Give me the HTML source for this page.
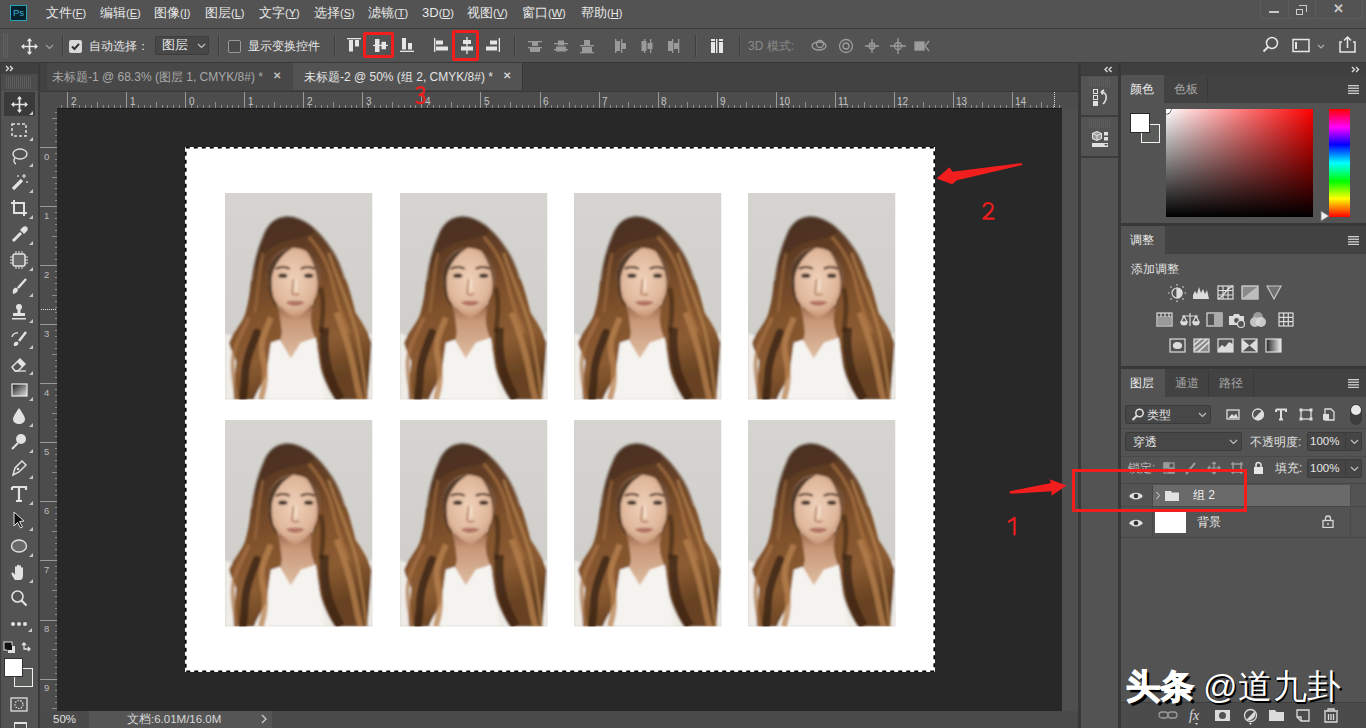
<!DOCTYPE html><html><head><meta charset="utf-8"><style>
*{box-sizing:border-box;margin:0;padding:0}
html,body{width:1366px;height:728px;overflow:hidden;background:#535353}
body{position:relative;font-family:"Liberation Sans",sans-serif;color:#e6e6e6}
.a{position:absolute}
.t{position:absolute;white-space:nowrap;line-height:1}
</style></head><body>
<div class="a" style="left:0px;top:0px;width:1366px;height:28px;background:#535353;"></div>
<div class="a" style="left:0px;top:28px;width:1366px;height:1px;background:#3a3a3a;"></div>
<div class="a" style="left:10px;top:5px;width:17px;height:16px;background:#06202c;border:1.5px solid #27a2b8"></div>
<div class="t" style="left:13px;top:8px;font-size:9.5px;color:#3ab4d0;">Ps</div>
<div class="t" style="left:46px;top:6px;font-size:13px;color:#e8e8e8;">文件<span style="font-size:11px;position:relative;top:-0.5px">(<u>F</u>)</span></div>
<div class="t" style="left:100px;top:6px;font-size:13px;color:#e8e8e8;">编辑<span style="font-size:11px;position:relative;top:-0.5px">(<u>E</u>)</span></div>
<div class="t" style="left:154px;top:6px;font-size:13px;color:#e8e8e8;">图像<span style="font-size:11px;position:relative;top:-0.5px">(<u>I</u>)</span></div>
<div class="t" style="left:205px;top:6px;font-size:13px;color:#e8e8e8;">图层<span style="font-size:11px;position:relative;top:-0.5px">(<u>L</u>)</span></div>
<div class="t" style="left:259px;top:6px;font-size:13px;color:#e8e8e8;">文字<span style="font-size:11px;position:relative;top:-0.5px">(<u>Y</u>)</span></div>
<div class="t" style="left:314px;top:6px;font-size:13px;color:#e8e8e8;">选择<span style="font-size:11px;position:relative;top:-0.5px">(<u>S</u>)</span></div>
<div class="t" style="left:368px;top:6px;font-size:13px;color:#e8e8e8;">滤镜<span style="font-size:11px;position:relative;top:-0.5px">(<u>T</u>)</span></div>
<div class="t" style="left:422px;top:6px;font-size:13px;color:#e8e8e8;">3D<span style="font-size:11px;position:relative;top:-0.5px">(<u>D</u>)</span></div>
<div class="t" style="left:467px;top:6px;font-size:13px;color:#e8e8e8;">视图<span style="font-size:11px;position:relative;top:-0.5px">(<u>V</u>)</span></div>
<div class="t" style="left:522px;top:6px;font-size:13px;color:#e8e8e8;">窗口<span style="font-size:11px;position:relative;top:-0.5px">(<u>W</u>)</span></div>
<div class="t" style="left:581px;top:6px;font-size:13px;color:#e8e8e8;">帮助<span style="font-size:11px;position:relative;top:-0.5px">(<u>H</u>)</span></div>
<div class="a" style="left:1260px;top:-3px;width:103px;height:22px;border:1px solid #5d5d5d;border-radius:3px"></div>
<div class="a" style="left:1288px;top:0px;width:1px;height:18px;background:#5d5d5d;"></div>
<div class="a" style="left:1315px;top:0px;width:1px;height:18px;background:#5d5d5d;"></div>
<div class="a" style="left:1269px;top:11px;width:10px;height:2px;background:#c8c8c8;"></div>
<div class="a" style="left:1296px;top:9px;width:7px;height:6px;border:1.5px solid #c8c8c8"></div>
<div class="a" style="left:1299px;top:5px;width:8px;height:7px;border:1.5px solid #c8c8c8;border-left:none;border-bottom:none"></div>
<div class="t" style="left:1333px;top:2px;font-size:13px;color:#c8c8c8;font-weight:bold;">✕</div>
<div class="a" style="left:0px;top:29px;width:1366px;height:33px;background:#535353;"></div>
<div class="a" style="left:0px;top:62px;width:1366px;height:1px;background:#383838;"></div>
<div class="a" style="left:3px;top:33px;width:5px;height:25px;background:repeating-linear-gradient(90deg,#5f5f5f 0 1px,transparent 1px 2px),repeating-linear-gradient(180deg,transparent 0 1px,#535353 1px 2px)"></div>
<svg class="a" style="left:21px;top:38px" width="17" height="17" viewBox="0 0 16 16"><path d="M8 1 L8 15 M1 8 L15 8" stroke="#e6e6e6" stroke-width="1.6"/><path d="M8 0 L5.5 3 L10.5 3Z M8 16 L5.5 13 L10.5 13Z M0 8 L3 5.5 L3 10.5Z M16 8 L13 5.5 L13 10.5Z" fill="#e6e6e6"/></svg>
<svg class="a" style="left:45px;top:44px" width="9" height="6"><path d="M1 1 L4.5 4.5 L8 1" stroke="#a0a0a0" fill="none" stroke-width="1.2"/></svg>
<div class="a" style="left:62px;top:35px;width:1px;height:22px;background:#3e3e3e;"></div>
<div class="a" style="left:63px;top:35px;width:1px;height:22px;background:#5c5c5c;"></div>
<div class="a" style="left:69px;top:40px;width:13px;height:13px;background:#d9d9d9;border-radius:2px"></div>
<svg class="a" style="left:69px;top:40px" width="13" height="13"><path d="M3 6.5 L5.5 9 L10 3.8" stroke="#333" stroke-width="2" fill="none"/></svg>
<div class="t" style="left:89px;top:40px;font-size:12px;color:#e4e4e4;">自动选择：</div>
<div class="a" style="left:155px;top:36px;width:54px;height:19px;background:#474747;border:1px solid #3d3d3d;border-radius:2px"></div>
<div class="t" style="left:162px;top:39px;font-size:12.5px;color:#e4e4e4;">图层</div>
<svg class="a" style="left:197px;top:43px" width="9" height="6"><path d="M1 1 L4.5 4.5 L8 1" stroke="#c0c0c0" fill="none" stroke-width="1.2"/></svg>
<div class="a" style="left:218px;top:35px;width:1px;height:22px;background:#3e3e3e;"></div>
<div class="a" style="left:219px;top:35px;width:1px;height:22px;background:#5c5c5c;"></div>
<div class="a" style="left:228px;top:40px;width:13px;height:13px;background:#4a4a4a;border:1.5px solid #9a9a9a;border-radius:2px"></div>
<div class="t" style="left:248px;top:40px;font-size:12px;color:#e4e4e4;">显示变换控件</div>
<div class="a" style="left:334px;top:35px;width:1px;height:22px;background:#3e3e3e;"></div>
<div class="a" style="left:335px;top:35px;width:1px;height:22px;background:#5c5c5c;"></div>
<svg class="a" style="left:347px;top:38px" width="17" height="18" fill="#e6e6e6"><rect x="0" y="0" width="14" height="1.3"/><rect x="2" y="2" width="4" height="11.5"/><rect x="8" y="2" width="4" height="6.5"/></svg>
<svg class="a" style="left:373px;top:38px" width="17" height="18" fill="#e6e6e6"><rect x="0" y="6.8" width="15" height="1.3"/><rect x="2" y="1" width="4.5" height="13"/><rect x="8.5" y="3.8" width="4.5" height="7.5"/></svg>
<svg class="a" style="left:400px;top:38px" width="17" height="18" fill="#e6e6e6"><rect x="0" y="12.7" width="14" height="1.3"/><rect x="2" y="0" width="4" height="11.5"/><rect x="8" y="5" width="4" height="6.5"/></svg>
<svg class="a" style="left:434px;top:38px" width="17" height="18" fill="#e6e6e6"><rect x="0" y="0" width="1.3" height="14"/><rect x="2" y="2.5" width="7" height="4"/><rect x="2" y="8.5" width="12" height="4"/></svg>
<svg class="a" style="left:461px;top:37px" width="17" height="18" fill="#e6e6e6"><rect x="5.3" y="0" width="1.3" height="17"/><rect x="2" y="3" width="8" height="4"/><rect x="0" y="9.5" width="12" height="4"/></svg>
<svg class="a" style="left:486px;top:38px" width="17" height="18" fill="#e6e6e6"><rect x="12.7" y="0" width="1.3" height="14"/><rect x="4" y="2.5" width="7" height="4"/><rect x="0" y="8.5" width="11" height="4"/></svg>
<div class="a" style="left:514px;top:35px;width:1px;height:22px;background:#3e3e3e;"></div>
<div class="a" style="left:515px;top:35px;width:1px;height:22px;background:#5c5c5c;"></div>
<svg class="a" style="left:528px;top:39px" width="15" height="15" fill="#9a9a9a"><rect x="0" y="2" width="14" height="1.3"/><rect x="4" y="3" width="6" height="4"/><rect x="0" y="8" width="14" height="1.3"/><rect x="2" y="9" width="10" height="4"/></svg>
<svg class="a" style="left:554px;top:39px" width="15" height="15" fill="#9a9a9a"><rect x="0" y="4" width="14" height="1.3"/><rect x="4" y="1.5" width="6" height="5"/><rect x="0" y="10" width="14" height="1.3"/><rect x="2" y="7.5" width="10" height="5"/></svg>
<svg class="a" style="left:580px;top:39px" width="15" height="15" fill="#9a9a9a"><rect x="4" y="1" width="6" height="5"/><rect x="0" y="6" width="14" height="1.3"/><rect x="2" y="8" width="10" height="5"/><rect x="0" y="13" width="14" height="1.3"/></svg>
<svg class="a" style="left:614px;top:39px" width="15" height="15" fill="#9a9a9a"><rect x="1" y="0" width="1.3" height="14"/><rect x="2" y="2" width="4" height="10"/><rect x="7" y="0" width="1.3" height="14"/><rect x="8" y="4" width="4" height="6"/></svg>
<svg class="a" style="left:640px;top:39px" width="15" height="15" fill="#9a9a9a"><rect x="4" y="0" width="1.3" height="14"/><rect x="1.5" y="2" width="5" height="10"/><rect x="10" y="0" width="1.3" height="14"/><rect x="7.5" y="4" width="5" height="6"/></svg>
<svg class="a" style="left:666px;top:39px" width="15" height="15" fill="#9a9a9a"><rect x="2" y="2" width="4" height="10"/><rect x="6" y="0" width="1.3" height="14"/><rect x="8" y="4" width="4" height="6"/><rect x="12" y="0" width="1.3" height="14"/></svg>
<div class="a" style="left:695px;top:35px;width:1px;height:22px;background:#3e3e3e;"></div>
<div class="a" style="left:696px;top:35px;width:1px;height:22px;background:#5c5c5c;"></div>
<svg class="a" style="left:710px;top:38px" width="15" height="16" fill="#e6e6e6"><rect x="1" y="4" width="4" height="11"/><rect x="9" y="4" width="4" height="11"/><rect x="6" y="1" width="1.4" height="14"/><rect x="1" y="1" width="4" height="2"/><rect x="9" y="1" width="4" height="2"/></svg>
<div class="a" style="left:739px;top:35px;width:1px;height:22px;background:#3e3e3e;"></div>
<div class="a" style="left:740px;top:35px;width:1px;height:22px;background:#5c5c5c;"></div>
<div class="t" style="left:748px;top:40px;font-size:12px;color:#8c8c8c;">3D 模式:</div>
<svg class="a" style="left:810px;top:37px" width="125" height="18" fill="none" stroke="#9c9c9c" stroke-width="1.3"><ellipse cx="9" cy="9" rx="7" ry="4"/><circle cx="10" cy="7" r="3.5"/><circle cx="36" cy="9" r="6.5"/><circle cx="36" cy="9" r="3"/><path d="M62 2 L62 16 M55 9 L69 9"/><circle cx="62" cy="9" r="3"/><path d="M88 1 L88 17 M80 9 L96 9"/><circle cx="88" cy="9" r="3.5"/><rect x="105" y="5" width="9" height="8" fill="#9c9c9c"/><path d="M119 4 L115 9 L119 14"/></svg>
<svg class="a" style="left:1262px;top:36px" width="100" height="18" fill="none" stroke="#e6e6e6" stroke-width="1.5"><circle cx="10" cy="7" r="5.5"/><path d="M6 11 L1.5 15.5" stroke-width="2"/><rect x="31" y="3.5" width="16" height="12"/><rect x="33" y="6" width="2" height="7" fill="#e6e6e6" stroke="none"/><path d="M56 9 L59 12 L62 9" stroke="#b0b0b0" stroke-width="1.1"/><path d="M80 6 L78 6 L78 16 L93 16 L93 6 L91 6 M85.5 12 L85.5 1 M82 4.5 L85.5 1 L89 4.5"/></svg>
<div class="a" style="left:0px;top:63px;width:38px;height:665px;background:#535353;"></div>
<div class="a" style="left:0px;top:63px;width:38px;height:11px;background:#3f3f3f;"></div>
<svg class="a" style="left:5px;top:65px" width="10" height="7" fill="none" stroke="#dcdcdc" stroke-width="1.4"><path d="M1 1 L3.5 3.5 L1 6 M5 1 L7.5 3.5 L5 6"/></svg>
<div class="a" style="left:0px;top:74px;width:38px;height:17px;background:#4b4b4b;"></div>
<div class="a" style="left:6px;top:76px;width:26px;height:13px;background:repeating-linear-gradient(90deg,#5c5c5c 0 1px,transparent 1px 2px)"></div>
<div class="a" style="left:0px;top:63px;width:1px;height:665px;background:#3c3c3c;"></div>
<div class="a" style="left:38px;top:63px;width:2px;height:665px;background:#393939;"></div>
<div class="a" style="left:4px;top:92px;width:31px;height:24px;background:#3a3a3a;"></div>
<svg class="a" style="left:11px;top:96px" width="17" height="17" viewBox="0 0 16 16"><path d="M8 1 L8 15 M1 8 L15 8" stroke="#e2e2e2" stroke-width="1.6"/><path d="M8 0 L5.5 3 L10.5 3Z M8 16 L5.5 13 L10.5 13Z M0 8 L3 5.5 L3 10.5Z M16 8 L13 5.5 L13 10.5Z" fill="#e2e2e2"/></svg>
<svg class="a" style="left:29px;top:111px" width="4" height="4"><path d="M4 0 L4 4 L0 4Z" fill="#c8c8c8"/></svg>
<svg class="a" style="left:10px;top:121px" width="18" height="18" viewBox="0 0 18 18"><rect x="2" y="3" width="14" height="12" fill="none" stroke="#e2e2e2" stroke-width="1.5" stroke-dasharray="3 2"/></svg>
<svg class="a" style="left:29px;top:137px" width="4" height="4"><path d="M4 0 L4 4 L0 4Z" fill="#c8c8c8"/></svg>
<svg class="a" style="left:10px;top:147px" width="18" height="18" viewBox="0 0 18 18"><ellipse cx="10" cy="7" rx="7" ry="5" fill="none" stroke="#e2e2e2" stroke-width="1.4"/><path d="M5 11 C3 13 4 16 6 17" fill="none" stroke="#e2e2e2" stroke-width="1.4"/></svg>
<svg class="a" style="left:29px;top:163px" width="4" height="4"><path d="M4 0 L4 4 L0 4Z" fill="#c8c8c8"/></svg>
<svg class="a" style="left:10px;top:173px" width="18" height="18" viewBox="0 0 18 18"><path d="M3 16 L12 7" stroke="#e2e2e2" stroke-width="3.2"/><path d="M14 1 L14 5 M12 3 L16 3 M8 2 L8 4 M17 8 L17 10" stroke="#e2e2e2" stroke-width="1.2"/></svg>
<svg class="a" style="left:29px;top:189px" width="4" height="4"><path d="M4 0 L4 4 L0 4Z" fill="#c8c8c8"/></svg>
<svg class="a" style="left:10px;top:199px" width="18" height="18" viewBox="0 0 18 18"><path d="M4 1 L4 14 L17 14 M1 4 L14 4 L14 17" fill="none" stroke="#e2e2e2" stroke-width="2"/></svg>
<svg class="a" style="left:29px;top:215px" width="4" height="4"><path d="M4 0 L4 4 L0 4Z" fill="#c8c8c8"/></svg>
<svg class="a" style="left:10px;top:225px" width="18" height="18" viewBox="0 0 18 18"><path d="M3 16 L11 8" stroke="#e2e2e2" stroke-width="3" fill="none"/><path d="M10 5 L13 2 C14 1 16 1 17 2 C18 3 18 5 17 6 L14 9Z" fill="#e2e2e2"/></svg>
<svg class="a" style="left:29px;top:241px" width="4" height="4"><path d="M4 0 L4 4 L0 4Z" fill="#c8c8c8"/></svg>
<svg class="a" style="left:10px;top:251px" width="18" height="18" viewBox="0 0 18 18"><rect x="3" y="3" width="12" height="12" rx="2" fill="#6a6a6a" stroke="#e2e2e2" stroke-width="1.5"/><path d="M6 0 V3 M9 0 V3 M12 0 V3 M6 15 V18 M9 15 V18 M12 15 V18 M0 6 H3 M0 9 H3 M0 12 H3 M15 6 H18 M15 9 H18 M15 12 H18" stroke="#e2e2e2" stroke-width="1"/></svg>
<svg class="a" style="left:29px;top:267px" width="4" height="4"><path d="M4 0 L4 4 L0 4Z" fill="#c8c8c8"/></svg>
<svg class="a" style="left:10px;top:277px" width="18" height="18" viewBox="0 0 18 18"><path d="M8 11 L16 2" stroke="#e2e2e2" stroke-width="2.5"/><path d="M3 17 C2 13 4 10 7 11 C9 12 8 16 3 17Z" fill="#e2e2e2"/></svg>
<svg class="a" style="left:29px;top:293px" width="4" height="4"><path d="M4 0 L4 4 L0 4Z" fill="#c8c8c8"/></svg>
<svg class="a" style="left:10px;top:303px" width="18" height="18" viewBox="0 0 18 18"><circle cx="9" cy="4" r="3" fill="#e2e2e2"/><rect x="7.5" y="6" width="3" height="5" fill="#e2e2e2"/><rect x="3" y="10" width="12" height="3" fill="#e2e2e2"/><rect x="2" y="15" width="14" height="1.5" fill="#e2e2e2"/></svg>
<svg class="a" style="left:29px;top:319px" width="4" height="4"><path d="M4 0 L4 4 L0 4Z" fill="#c8c8c8"/></svg>
<svg class="a" style="left:10px;top:329px" width="18" height="18" viewBox="0 0 18 18"><path d="M9 12 L16 3" stroke="#e2e2e2" stroke-width="2.5"/><path d="M4 17 C3 14 5 12 8 13 C9 15 8 17 4 17Z" fill="#e2e2e2"/><path d="M2 8 A5 5 0 0 1 8 4" fill="none" stroke="#e2e2e2" stroke-width="1.4"/></svg>
<svg class="a" style="left:29px;top:345px" width="4" height="4"><path d="M4 0 L4 4 L0 4Z" fill="#c8c8c8"/></svg>
<svg class="a" style="left:10px;top:355px" width="18" height="18" viewBox="0 0 18 18"><path d="M2 12 L10 4 L15 9 L8 16 L5 16Z" fill="none" stroke="#e2e2e2" stroke-width="1.5"/><path d="M7 7 L10 4 L15 9 L12 12Z" fill="#e2e2e2"/><path d="M5 16 L16 16" stroke="#e2e2e2" stroke-width="1.3"/></svg>
<svg class="a" style="left:29px;top:371px" width="4" height="4"><path d="M4 0 L4 4 L0 4Z" fill="#c8c8c8"/></svg>
<svg class="a" style="left:10px;top:381px" width="18" height="18" viewBox="0 0 18 18"><defs><linearGradient id="tg" x1="0" y1="0" x2="1" y2="1"><stop offset="0" stop-color="#1a1a1a"/><stop offset="1" stop-color="#e0e0e0"/></linearGradient></defs><rect x="2" y="3" width="15" height="12" fill="url(#tg)" stroke="#e2e2e2" stroke-width="1.3"/></svg>
<svg class="a" style="left:29px;top:397px" width="4" height="4"><path d="M4 0 L4 4 L0 4Z" fill="#c8c8c8"/></svg>
<svg class="a" style="left:10px;top:407px" width="18" height="18" viewBox="0 0 18 18"><path d="M9 1 C9 1 3 9 3 12 C3 15.5 6 17 9 17 C12 17 15 15.5 15 12 C15 9 9 1 9 1Z" fill="#e2e2e2"/></svg>
<svg class="a" style="left:29px;top:423px" width="4" height="4"><path d="M4 0 L4 4 L0 4Z" fill="#c8c8c8"/></svg>
<svg class="a" style="left:10px;top:433px" width="18" height="18" viewBox="0 0 18 18"><circle cx="11" cy="6" r="5" fill="#e2e2e2"/><path d="M8 10 L2 16" stroke="#e2e2e2" stroke-width="2"/></svg>
<svg class="a" style="left:29px;top:449px" width="4" height="4"><path d="M4 0 L4 4 L0 4Z" fill="#c8c8c8"/></svg>
<svg class="a" style="left:10px;top:459px" width="18" height="18" viewBox="0 0 18 18"><path d="M3 16 L5 9 L12 2 L16 6 L9 13Z" fill="none" stroke="#e2e2e2" stroke-width="1.5"/><circle cx="8" cy="10" r="1.3" fill="#e2e2e2"/></svg>
<svg class="a" style="left:29px;top:475px" width="4" height="4"><path d="M4 0 L4 4 L0 4Z" fill="#c8c8c8"/></svg>
<svg class="a" style="left:10px;top:485px" width="18" height="18" viewBox="0 0 18 18"><path d="M2 2 H16 V5 M2 2 V5 M9 2 V16 M6 16 H12" fill="none" stroke="#e2e2e2" stroke-width="2.2"/></svg>
<svg class="a" style="left:29px;top:501px" width="4" height="4"><path d="M4 0 L4 4 L0 4Z" fill="#c8c8c8"/></svg>
<svg class="a" style="left:10px;top:511px" width="18" height="18" viewBox="0 0 18 18"><path d="M4 1 L4 15 L7.5 11.5 L10.5 17 L12.5 16 L9.5 10.5 L14 10Z" fill="#111" stroke="#e2e2e2" stroke-width="1"/></svg>
<svg class="a" style="left:29px;top:527px" width="4" height="4"><path d="M4 0 L4 4 L0 4Z" fill="#c8c8c8"/></svg>
<svg class="a" style="left:10px;top:537px" width="18" height="18" viewBox="0 0 18 18"><ellipse cx="9" cy="9" rx="7.5" ry="6" fill="#6a6a6a" stroke="#e2e2e2" stroke-width="1.4"/></svg>
<svg class="a" style="left:29px;top:553px" width="4" height="4"><path d="M4 0 L4 4 L0 4Z" fill="#c8c8c8"/></svg>
<svg class="a" style="left:10px;top:563px" width="18" height="18" viewBox="0 0 18 18"><path d="M5 17 C3 14 1 11 1.5 10 C2.5 9 4 10 5 12 V4 C5 3 7 3 7 4 V9 V2.5 C7 1.5 9 1.5 9 2.5 V9 V3 C9 2 11 2 11 3 V9 V5 C11 4 13 4 13 5 V12 C13 15 12 17 10 17Z" fill="#e2e2e2"/></svg>
<svg class="a" style="left:29px;top:579px" width="4" height="4"><path d="M4 0 L4 4 L0 4Z" fill="#c8c8c8"/></svg>
<svg class="a" style="left:10px;top:589px" width="18" height="18" viewBox="0 0 18 18"><circle cx="7.5" cy="7.5" r="5.5" fill="none" stroke="#e2e2e2" stroke-width="1.6"/><path d="M11.5 11.5 L16.5 16.5" stroke="#e2e2e2" stroke-width="2.2"/></svg>
<svg class="a" style="left:10px;top:615px" width="18" height="18" viewBox="0 0 18 18"><circle cx="3" cy="9" r="2" fill="#e2e2e2"/><circle cx="9" cy="9" r="2" fill="#e2e2e2"/><circle cx="15" cy="9" r="2" fill="#e2e2e2"/></svg>
<svg class="a" style="left:28px;top:628px" width="4" height="4"><path d="M4 0 L4 4 L0 4Z" fill="#c8c8c8"/></svg>
<svg class="a" style="left:3px;top:640px" width="34" height="16"><rect x="1" y="2" width="8" height="8" fill="#111" stroke="#e0e0e0" stroke-width="1"/><rect x="5" y="6" width="7" height="7" fill="#e0e0e0"/><rect x="4" y="5" width="5" height="5" fill="#111"/><path d="M21 3 L21 9 L27 9 M19 5 L21 3 L23 5 M25 7 L27 9 L25 11" fill="none" stroke="#e0e0e0" stroke-width="1.3"/></svg>
<div class="a" style="left:14px;top:668px;width:19px;height:19px;background:#5c5e5b;border:1.5px solid #f0f0f0"></div>
<div class="a" style="left:4px;top:658px;width:19px;height:19px;background:#ffffff;border:1px solid #333"></div>
<svg class="a" style="left:10px;top:697px" width="18" height="16"><rect x="1" y="1" width="16" height="13" fill="none" stroke="#e0e0e0" stroke-width="1.3"/><circle cx="9" cy="7.5" r="4" fill="none" stroke="#e0e0e0" stroke-width="1.2" stroke-dasharray="1.5 1.3"/></svg>
<div class="a" style="left:14px;top:722px;width:13px;height:6px;background:#e0e0e0;"></div>
<div class="a" style="left:15px;top:724px;width:11px;height:4px;background:#535353;"></div>
<div class="a" style="left:40px;top:63px;width:1038px;height:28px;background:#424242;"></div>
<div class="a" style="left:47px;top:63px;width:246px;height:27px;background:#484848;"></div>
<div class="t" style="left:52px;top:71px;font-size:12px;color:#a9a9a9;">未标题-1 @ 68.3% (图层 1, CMYK/8#) *</div>
<div class="t" style="left:273px;top:70px;font-size:10px;color:#c0c0c0;font-weight:bold;top:71px;">✕</div>
<div class="a" style="left:293px;top:63px;width:229px;height:27px;background:#535353;"></div>
<div class="a" style="left:522px;top:63px;width:1px;height:27px;background:#383838;"></div>
<div class="t" style="left:304px;top:71px;font-size:12px;color:#e4e4e4;">未标题-2 @ 50% (组 2, CMYK/8#) *</div>
<div class="t" style="left:503px;top:71px;font-size:10px;color:#d0d0d0;font-weight:bold;">✕</div>
<div class="a" style="left:40px;top:91px;width:1038px;height:1px;background:#383838;"></div>
<div class="a" style="left:40px;top:92px;width:1038px;height:16px;background:#4c4c4c;"></div>
<div class="a" style="left:40px;top:108px;width:1038px;height:1px;background:#1a1a1a;"></div>
<svg class="a" style="left:0;top:92px" width="1078" height="16" shape-rendering="crispEdges"><rect x="61" y="13" width="1" height="3" fill="#8c8c8c"/><rect x="67" y="0" width="1" height="16" fill="#9a9a9a"/><rect x="73" y="13" width="1" height="3" fill="#8c8c8c"/><rect x="79" y="13" width="1" height="3" fill="#8c8c8c"/><rect x="85" y="13" width="1" height="3" fill="#8c8c8c"/><rect x="91" y="13" width="1" height="3" fill="#8c8c8c"/><rect x="97" y="10" width="1" height="6" fill="#8c8c8c"/><rect x="103" y="13" width="1" height="3" fill="#8c8c8c"/><rect x="108" y="13" width="1" height="3" fill="#8c8c8c"/><rect x="114" y="13" width="1" height="3" fill="#8c8c8c"/><rect x="120" y="13" width="1" height="3" fill="#8c8c8c"/><rect x="126" y="0" width="1" height="16" fill="#9a9a9a"/><rect x="132" y="13" width="1" height="3" fill="#8c8c8c"/><rect x="138" y="13" width="1" height="3" fill="#8c8c8c"/><rect x="144" y="13" width="1" height="3" fill="#8c8c8c"/><rect x="150" y="13" width="1" height="3" fill="#8c8c8c"/><rect x="156" y="10" width="1" height="6" fill="#8c8c8c"/><rect x="162" y="13" width="1" height="3" fill="#8c8c8c"/><rect x="167" y="13" width="1" height="3" fill="#8c8c8c"/><rect x="173" y="13" width="1" height="3" fill="#8c8c8c"/><rect x="179" y="13" width="1" height="3" fill="#8c8c8c"/><rect x="185" y="0" width="1" height="16" fill="#9a9a9a"/><rect x="191" y="13" width="1" height="3" fill="#8c8c8c"/><rect x="197" y="13" width="1" height="3" fill="#8c8c8c"/><rect x="203" y="13" width="1" height="3" fill="#8c8c8c"/><rect x="209" y="13" width="1" height="3" fill="#8c8c8c"/><rect x="215" y="10" width="1" height="6" fill="#8c8c8c"/><rect x="221" y="13" width="1" height="3" fill="#8c8c8c"/><rect x="227" y="13" width="1" height="3" fill="#8c8c8c"/><rect x="232" y="13" width="1" height="3" fill="#8c8c8c"/><rect x="238" y="13" width="1" height="3" fill="#8c8c8c"/><rect x="244" y="0" width="1" height="16" fill="#9a9a9a"/><rect x="250" y="13" width="1" height="3" fill="#8c8c8c"/><rect x="256" y="13" width="1" height="3" fill="#8c8c8c"/><rect x="262" y="13" width="1" height="3" fill="#8c8c8c"/><rect x="268" y="13" width="1" height="3" fill="#8c8c8c"/><rect x="274" y="10" width="1" height="6" fill="#8c8c8c"/><rect x="280" y="13" width="1" height="3" fill="#8c8c8c"/><rect x="286" y="13" width="1" height="3" fill="#8c8c8c"/><rect x="291" y="13" width="1" height="3" fill="#8c8c8c"/><rect x="297" y="13" width="1" height="3" fill="#8c8c8c"/><rect x="303" y="0" width="1" height="16" fill="#9a9a9a"/><rect x="309" y="13" width="1" height="3" fill="#8c8c8c"/><rect x="315" y="13" width="1" height="3" fill="#8c8c8c"/><rect x="321" y="13" width="1" height="3" fill="#8c8c8c"/><rect x="327" y="13" width="1" height="3" fill="#8c8c8c"/><rect x="333" y="10" width="1" height="6" fill="#8c8c8c"/><rect x="339" y="13" width="1" height="3" fill="#8c8c8c"/><rect x="345" y="13" width="1" height="3" fill="#8c8c8c"/><rect x="351" y="13" width="1" height="3" fill="#8c8c8c"/><rect x="356" y="13" width="1" height="3" fill="#8c8c8c"/><rect x="362" y="0" width="1" height="16" fill="#9a9a9a"/><rect x="368" y="13" width="1" height="3" fill="#8c8c8c"/><rect x="374" y="13" width="1" height="3" fill="#8c8c8c"/><rect x="380" y="13" width="1" height="3" fill="#8c8c8c"/><rect x="386" y="13" width="1" height="3" fill="#8c8c8c"/><rect x="392" y="10" width="1" height="6" fill="#8c8c8c"/><rect x="398" y="13" width="1" height="3" fill="#8c8c8c"/><rect x="404" y="13" width="1" height="3" fill="#8c8c8c"/><rect x="410" y="13" width="1" height="3" fill="#8c8c8c"/><rect x="415" y="13" width="1" height="3" fill="#8c8c8c"/><rect x="421" y="0" width="1" height="16" fill="#9a9a9a"/><rect x="427" y="13" width="1" height="3" fill="#8c8c8c"/><rect x="433" y="13" width="1" height="3" fill="#8c8c8c"/><rect x="439" y="13" width="1" height="3" fill="#8c8c8c"/><rect x="445" y="13" width="1" height="3" fill="#8c8c8c"/><rect x="451" y="10" width="1" height="6" fill="#8c8c8c"/><rect x="457" y="13" width="1" height="3" fill="#8c8c8c"/><rect x="463" y="13" width="1" height="3" fill="#8c8c8c"/><rect x="469" y="13" width="1" height="3" fill="#8c8c8c"/><rect x="475" y="13" width="1" height="3" fill="#8c8c8c"/><rect x="480" y="0" width="1" height="16" fill="#9a9a9a"/><rect x="486" y="13" width="1" height="3" fill="#8c8c8c"/><rect x="492" y="13" width="1" height="3" fill="#8c8c8c"/><rect x="498" y="13" width="1" height="3" fill="#8c8c8c"/><rect x="504" y="13" width="1" height="3" fill="#8c8c8c"/><rect x="510" y="10" width="1" height="6" fill="#8c8c8c"/><rect x="516" y="13" width="1" height="3" fill="#8c8c8c"/><rect x="522" y="13" width="1" height="3" fill="#8c8c8c"/><rect x="528" y="13" width="1" height="3" fill="#8c8c8c"/><rect x="534" y="13" width="1" height="3" fill="#8c8c8c"/><rect x="540" y="0" width="1" height="16" fill="#9a9a9a"/><rect x="545" y="13" width="1" height="3" fill="#8c8c8c"/><rect x="551" y="13" width="1" height="3" fill="#8c8c8c"/><rect x="557" y="13" width="1" height="3" fill="#8c8c8c"/><rect x="563" y="13" width="1" height="3" fill="#8c8c8c"/><rect x="569" y="10" width="1" height="6" fill="#8c8c8c"/><rect x="575" y="13" width="1" height="3" fill="#8c8c8c"/><rect x="581" y="13" width="1" height="3" fill="#8c8c8c"/><rect x="587" y="13" width="1" height="3" fill="#8c8c8c"/><rect x="593" y="13" width="1" height="3" fill="#8c8c8c"/><rect x="599" y="0" width="1" height="16" fill="#9a9a9a"/><rect x="604" y="13" width="1" height="3" fill="#8c8c8c"/><rect x="610" y="13" width="1" height="3" fill="#8c8c8c"/><rect x="616" y="13" width="1" height="3" fill="#8c8c8c"/><rect x="622" y="13" width="1" height="3" fill="#8c8c8c"/><rect x="628" y="10" width="1" height="6" fill="#8c8c8c"/><rect x="634" y="13" width="1" height="3" fill="#8c8c8c"/><rect x="640" y="13" width="1" height="3" fill="#8c8c8c"/><rect x="646" y="13" width="1" height="3" fill="#8c8c8c"/><rect x="652" y="13" width="1" height="3" fill="#8c8c8c"/><rect x="658" y="0" width="1" height="16" fill="#9a9a9a"/><rect x="664" y="13" width="1" height="3" fill="#8c8c8c"/><rect x="669" y="13" width="1" height="3" fill="#8c8c8c"/><rect x="675" y="13" width="1" height="3" fill="#8c8c8c"/><rect x="681" y="13" width="1" height="3" fill="#8c8c8c"/><rect x="687" y="10" width="1" height="6" fill="#8c8c8c"/><rect x="693" y="13" width="1" height="3" fill="#8c8c8c"/><rect x="699" y="13" width="1" height="3" fill="#8c8c8c"/><rect x="705" y="13" width="1" height="3" fill="#8c8c8c"/><rect x="711" y="13" width="1" height="3" fill="#8c8c8c"/><rect x="717" y="0" width="1" height="16" fill="#9a9a9a"/><rect x="723" y="13" width="1" height="3" fill="#8c8c8c"/><rect x="728" y="13" width="1" height="3" fill="#8c8c8c"/><rect x="734" y="13" width="1" height="3" fill="#8c8c8c"/><rect x="740" y="13" width="1" height="3" fill="#8c8c8c"/><rect x="746" y="10" width="1" height="6" fill="#8c8c8c"/><rect x="752" y="13" width="1" height="3" fill="#8c8c8c"/><rect x="758" y="13" width="1" height="3" fill="#8c8c8c"/><rect x="764" y="13" width="1" height="3" fill="#8c8c8c"/><rect x="770" y="13" width="1" height="3" fill="#8c8c8c"/><rect x="776" y="0" width="1" height="16" fill="#9a9a9a"/><rect x="782" y="13" width="1" height="3" fill="#8c8c8c"/><rect x="788" y="13" width="1" height="3" fill="#8c8c8c"/><rect x="793" y="13" width="1" height="3" fill="#8c8c8c"/><rect x="799" y="13" width="1" height="3" fill="#8c8c8c"/><rect x="805" y="10" width="1" height="6" fill="#8c8c8c"/><rect x="811" y="13" width="1" height="3" fill="#8c8c8c"/><rect x="817" y="13" width="1" height="3" fill="#8c8c8c"/><rect x="823" y="13" width="1" height="3" fill="#8c8c8c"/><rect x="829" y="13" width="1" height="3" fill="#8c8c8c"/><rect x="835" y="0" width="1" height="16" fill="#9a9a9a"/><rect x="841" y="13" width="1" height="3" fill="#8c8c8c"/><rect x="847" y="13" width="1" height="3" fill="#8c8c8c"/><rect x="852" y="13" width="1" height="3" fill="#8c8c8c"/><rect x="858" y="13" width="1" height="3" fill="#8c8c8c"/><rect x="864" y="10" width="1" height="6" fill="#8c8c8c"/><rect x="870" y="13" width="1" height="3" fill="#8c8c8c"/><rect x="876" y="13" width="1" height="3" fill="#8c8c8c"/><rect x="882" y="13" width="1" height="3" fill="#8c8c8c"/><rect x="888" y="13" width="1" height="3" fill="#8c8c8c"/><rect x="894" y="0" width="1" height="16" fill="#9a9a9a"/><rect x="900" y="13" width="1" height="3" fill="#8c8c8c"/><rect x="906" y="13" width="1" height="3" fill="#8c8c8c"/><rect x="912" y="13" width="1" height="3" fill="#8c8c8c"/><rect x="917" y="13" width="1" height="3" fill="#8c8c8c"/><rect x="923" y="10" width="1" height="6" fill="#8c8c8c"/><rect x="929" y="13" width="1" height="3" fill="#8c8c8c"/><rect x="935" y="13" width="1" height="3" fill="#8c8c8c"/><rect x="941" y="13" width="1" height="3" fill="#8c8c8c"/><rect x="947" y="13" width="1" height="3" fill="#8c8c8c"/><rect x="953" y="0" width="1" height="16" fill="#9a9a9a"/><rect x="959" y="13" width="1" height="3" fill="#8c8c8c"/><rect x="965" y="13" width="1" height="3" fill="#8c8c8c"/><rect x="971" y="13" width="1" height="3" fill="#8c8c8c"/><rect x="976" y="13" width="1" height="3" fill="#8c8c8c"/><rect x="982" y="10" width="1" height="6" fill="#8c8c8c"/><rect x="988" y="13" width="1" height="3" fill="#8c8c8c"/><rect x="994" y="13" width="1" height="3" fill="#8c8c8c"/><rect x="1000" y="13" width="1" height="3" fill="#8c8c8c"/><rect x="1006" y="13" width="1" height="3" fill="#8c8c8c"/><rect x="1012" y="0" width="1" height="16" fill="#9a9a9a"/><rect x="1018" y="13" width="1" height="3" fill="#8c8c8c"/><rect x="1024" y="13" width="1" height="3" fill="#8c8c8c"/><rect x="1030" y="13" width="1" height="3" fill="#8c8c8c"/><rect x="1036" y="13" width="1" height="3" fill="#8c8c8c"/><rect x="1041" y="10" width="1" height="6" fill="#8c8c8c"/><rect x="1047" y="13" width="1" height="3" fill="#8c8c8c"/><rect x="1053" y="13" width="1" height="3" fill="#8c8c8c"/><rect x="1059" y="13" width="1" height="3" fill="#8c8c8c"/></svg>
<div class="t" style="left:71px;top:97px;font-size:10px;color:#c4c4c4;">2</div>
<div class="t" style="left:130px;top:97px;font-size:10px;color:#c4c4c4;">1</div>
<div class="t" style="left:189px;top:97px;font-size:10px;color:#c4c4c4;">0</div>
<div class="t" style="left:248px;top:97px;font-size:10px;color:#c4c4c4;">1</div>
<div class="t" style="left:307px;top:97px;font-size:10px;color:#c4c4c4;">2</div>
<div class="t" style="left:366px;top:97px;font-size:10px;color:#c4c4c4;">3</div>
<div class="t" style="left:425px;top:97px;font-size:10px;color:#c4c4c4;">4</div>
<div class="t" style="left:484px;top:97px;font-size:10px;color:#c4c4c4;">5</div>
<div class="t" style="left:543px;top:97px;font-size:10px;color:#c4c4c4;">6</div>
<div class="t" style="left:602px;top:97px;font-size:10px;color:#c4c4c4;">7</div>
<div class="t" style="left:661px;top:97px;font-size:10px;color:#c4c4c4;">8</div>
<div class="t" style="left:720px;top:97px;font-size:10px;color:#c4c4c4;">9</div>
<div class="t" style="left:779px;top:97px;font-size:10px;color:#c4c4c4;">10</div>
<div class="t" style="left:838px;top:97px;font-size:10px;color:#c4c4c4;">11</div>
<div class="t" style="left:897px;top:97px;font-size:10px;color:#c4c4c4;">12</div>
<div class="t" style="left:956px;top:97px;font-size:10px;color:#c4c4c4;">13</div>
<div class="t" style="left:1015px;top:97px;font-size:10px;color:#c4c4c4;">14</div>
<div class="a" style="left:40px;top:92px;width:18px;height:16px;background:#4c4c4c;"></div>
<div class="a" style="left:40px;top:108px;width:18px;height:603px;background:#4c4c4c;"></div>
<svg class="a" style="left:40px;top:0" width="18" height="711" shape-rendering="crispEdges"><rect x="15" y="112" width="3" height="1" fill="#8c8c8c"/><rect x="12" y="118" width="6" height="1" fill="#8c8c8c"/><rect x="15" y="123" width="3" height="1" fill="#8c8c8c"/><rect x="15" y="129" width="3" height="1" fill="#8c8c8c"/><rect x="15" y="135" width="3" height="1" fill="#8c8c8c"/><rect x="15" y="141" width="3" height="1" fill="#8c8c8c"/><rect x="0" y="147" width="18" height="1" fill="#9a9a9a"/><rect x="15" y="153" width="3" height="1" fill="#8c8c8c"/><rect x="15" y="159" width="3" height="1" fill="#8c8c8c"/><rect x="15" y="165" width="3" height="1" fill="#8c8c8c"/><rect x="15" y="171" width="3" height="1" fill="#8c8c8c"/><rect x="12" y="177" width="6" height="1" fill="#8c8c8c"/><rect x="15" y="183" width="3" height="1" fill="#8c8c8c"/><rect x="15" y="188" width="3" height="1" fill="#8c8c8c"/><rect x="15" y="194" width="3" height="1" fill="#8c8c8c"/><rect x="15" y="200" width="3" height="1" fill="#8c8c8c"/><rect x="0" y="206" width="18" height="1" fill="#9a9a9a"/><rect x="15" y="212" width="3" height="1" fill="#8c8c8c"/><rect x="15" y="218" width="3" height="1" fill="#8c8c8c"/><rect x="15" y="224" width="3" height="1" fill="#8c8c8c"/><rect x="15" y="230" width="3" height="1" fill="#8c8c8c"/><rect x="12" y="236" width="6" height="1" fill="#8c8c8c"/><rect x="15" y="242" width="3" height="1" fill="#8c8c8c"/><rect x="15" y="247" width="3" height="1" fill="#8c8c8c"/><rect x="15" y="253" width="3" height="1" fill="#8c8c8c"/><rect x="15" y="259" width="3" height="1" fill="#8c8c8c"/><rect x="0" y="265" width="18" height="1" fill="#9a9a9a"/><rect x="15" y="271" width="3" height="1" fill="#8c8c8c"/><rect x="15" y="277" width="3" height="1" fill="#8c8c8c"/><rect x="15" y="283" width="3" height="1" fill="#8c8c8c"/><rect x="15" y="289" width="3" height="1" fill="#8c8c8c"/><rect x="12" y="295" width="6" height="1" fill="#8c8c8c"/><rect x="15" y="301" width="3" height="1" fill="#8c8c8c"/><rect x="15" y="307" width="3" height="1" fill="#8c8c8c"/><rect x="15" y="312" width="3" height="1" fill="#8c8c8c"/><rect x="15" y="318" width="3" height="1" fill="#8c8c8c"/><rect x="0" y="324" width="18" height="1" fill="#9a9a9a"/><rect x="15" y="330" width="3" height="1" fill="#8c8c8c"/><rect x="15" y="336" width="3" height="1" fill="#8c8c8c"/><rect x="15" y="342" width="3" height="1" fill="#8c8c8c"/><rect x="15" y="348" width="3" height="1" fill="#8c8c8c"/><rect x="12" y="354" width="6" height="1" fill="#8c8c8c"/><rect x="15" y="360" width="3" height="1" fill="#8c8c8c"/><rect x="15" y="366" width="3" height="1" fill="#8c8c8c"/><rect x="15" y="371" width="3" height="1" fill="#8c8c8c"/><rect x="15" y="377" width="3" height="1" fill="#8c8c8c"/><rect x="0" y="383" width="18" height="1" fill="#9a9a9a"/><rect x="15" y="389" width="3" height="1" fill="#8c8c8c"/><rect x="15" y="395" width="3" height="1" fill="#8c8c8c"/><rect x="15" y="401" width="3" height="1" fill="#8c8c8c"/><rect x="15" y="407" width="3" height="1" fill="#8c8c8c"/><rect x="12" y="413" width="6" height="1" fill="#8c8c8c"/><rect x="15" y="419" width="3" height="1" fill="#8c8c8c"/><rect x="15" y="425" width="3" height="1" fill="#8c8c8c"/><rect x="15" y="431" width="3" height="1" fill="#8c8c8c"/><rect x="15" y="436" width="3" height="1" fill="#8c8c8c"/><rect x="0" y="442" width="18" height="1" fill="#9a9a9a"/><rect x="15" y="448" width="3" height="1" fill="#8c8c8c"/><rect x="15" y="454" width="3" height="1" fill="#8c8c8c"/><rect x="15" y="460" width="3" height="1" fill="#8c8c8c"/><rect x="15" y="466" width="3" height="1" fill="#8c8c8c"/><rect x="12" y="472" width="6" height="1" fill="#8c8c8c"/><rect x="15" y="478" width="3" height="1" fill="#8c8c8c"/><rect x="15" y="484" width="3" height="1" fill="#8c8c8c"/><rect x="15" y="490" width="3" height="1" fill="#8c8c8c"/><rect x="15" y="495" width="3" height="1" fill="#8c8c8c"/><rect x="0" y="501" width="18" height="1" fill="#9a9a9a"/><rect x="15" y="507" width="3" height="1" fill="#8c8c8c"/><rect x="15" y="513" width="3" height="1" fill="#8c8c8c"/><rect x="15" y="519" width="3" height="1" fill="#8c8c8c"/><rect x="15" y="525" width="3" height="1" fill="#8c8c8c"/><rect x="12" y="531" width="6" height="1" fill="#8c8c8c"/><rect x="15" y="537" width="3" height="1" fill="#8c8c8c"/><rect x="15" y="543" width="3" height="1" fill="#8c8c8c"/><rect x="15" y="549" width="3" height="1" fill="#8c8c8c"/><rect x="15" y="555" width="3" height="1" fill="#8c8c8c"/><rect x="0" y="560" width="18" height="1" fill="#9a9a9a"/><rect x="15" y="566" width="3" height="1" fill="#8c8c8c"/><rect x="15" y="572" width="3" height="1" fill="#8c8c8c"/><rect x="15" y="578" width="3" height="1" fill="#8c8c8c"/><rect x="15" y="584" width="3" height="1" fill="#8c8c8c"/><rect x="12" y="590" width="6" height="1" fill="#8c8c8c"/><rect x="15" y="596" width="3" height="1" fill="#8c8c8c"/><rect x="15" y="602" width="3" height="1" fill="#8c8c8c"/><rect x="15" y="608" width="3" height="1" fill="#8c8c8c"/><rect x="15" y="614" width="3" height="1" fill="#8c8c8c"/><rect x="0" y="620" width="18" height="1" fill="#9a9a9a"/><rect x="15" y="625" width="3" height="1" fill="#8c8c8c"/><rect x="15" y="631" width="3" height="1" fill="#8c8c8c"/><rect x="15" y="637" width="3" height="1" fill="#8c8c8c"/><rect x="15" y="643" width="3" height="1" fill="#8c8c8c"/><rect x="12" y="649" width="6" height="1" fill="#8c8c8c"/><rect x="15" y="655" width="3" height="1" fill="#8c8c8c"/><rect x="15" y="661" width="3" height="1" fill="#8c8c8c"/><rect x="15" y="667" width="3" height="1" fill="#8c8c8c"/><rect x="15" y="673" width="3" height="1" fill="#8c8c8c"/><rect x="0" y="679" width="18" height="1" fill="#9a9a9a"/><rect x="15" y="684" width="3" height="1" fill="#8c8c8c"/><rect x="15" y="690" width="3" height="1" fill="#8c8c8c"/><rect x="15" y="696" width="3" height="1" fill="#8c8c8c"/><rect x="15" y="702" width="3" height="1" fill="#8c8c8c"/><rect x="12" y="708" width="6" height="1" fill="#8c8c8c"/></svg>
<div class="t" style="left:44px;top:152px;font-size:9.5px;color:#bdbdbd;">0</div>
<div class="t" style="left:44px;top:211px;font-size:9.5px;color:#bdbdbd;">1</div>
<div class="t" style="left:44px;top:270px;font-size:9.5px;color:#bdbdbd;">2</div>
<div class="t" style="left:44px;top:329px;font-size:9.5px;color:#bdbdbd;">3</div>
<div class="t" style="left:44px;top:388px;font-size:9.5px;color:#bdbdbd;">4</div>
<div class="t" style="left:44px;top:447px;font-size:9.5px;color:#bdbdbd;">5</div>
<div class="t" style="left:44px;top:506px;font-size:9.5px;color:#bdbdbd;">6</div>
<div class="t" style="left:44px;top:565px;font-size:9.5px;color:#bdbdbd;">7</div>
<div class="t" style="left:44px;top:624px;font-size:9.5px;color:#bdbdbd;">8</div>
<div class="t" style="left:44px;top:683px;font-size:9.5px;color:#bdbdbd;">9</div>
<div class="a" style="left:57px;top:108px;width:1px;height:603px;background:#2a2a2a;"></div>
<div class="a" style="left:1054px;top:92px;width:1px;height:16px;background:repeating-linear-gradient(180deg,#e0e0e0 0 1px,transparent 1px 2px)"></div>
<div class="a" style="left:41px;top:309px;width:16px;height:1px;background:repeating-linear-gradient(90deg,#e0e0e0 0 1px,transparent 1px 2px)"></div>
<div class="a" style="left:58px;top:109px;width:1004px;height:602px;background:#282828;"></div>
<div class="a" style="left:1062px;top:108px;width:16px;height:603px;background:#4f4f4f;"></div>
<div class="a" style="left:40px;top:711px;width:1038px;height:17px;background:#4a4a4a;"></div>
<div class="a" style="left:89px;top:711px;width:183px;height:17px;background:#555555;"></div>
<div class="t" style="left:53px;top:714px;font-size:11.5px;color:#e0e0e0;">50%</div>
<div class="t" style="left:127px;top:714px;font-size:11.5px;color:#d8d8d8;">文档:6.01M/16.0M</div>
<svg class="a" style="left:261px;top:714px" width="6" height="10"><path d="M1 1 L5 5 L1 9" stroke="#d0d0d0" fill="none" stroke-width="1.2"/></svg>
<div class="a" style="left:185px;top:147px;width:750px;height:525px;background:#ffffff;"></div>
<svg class="a" style="left:185px;top:147px" width="750" height="525"><rect x="0.75" y="0.75" width="748.5" height="523.5" fill="none" stroke="#000" stroke-width="1.6" stroke-dasharray="4 4"/></svg>
<svg width="0" height="0" style="position:absolute"><defs>
<linearGradient id="pbg" x1="0" y1="0" x2="0" y2="1"><stop offset="0" stop-color="#d5d4d0"/><stop offset="1" stop-color="#cdccc8"/></linearGradient>
<linearGradient id="hr" x1="0" y1="0" x2="0.25" y2="1"><stop offset="0" stop-color="#4e3222"/><stop offset="0.3" stop-color="#633f25"/><stop offset="0.55" stop-color="#80522c"/><stop offset="0.8" stop-color="#8c5c32"/><stop offset="1" stop-color="#674222"/></linearGradient>
<radialGradient id="fc" cx="0.5" cy="0.45" r="0.6"><stop offset="0" stop-color="#eed0b8"/><stop offset="0.65" stop-color="#e0b89c"/><stop offset="1" stop-color="#bd8a68"/></radialGradient>
<linearGradient id="nk" x1="0" y1="0" x2="0" y2="1"><stop offset="0" stop-color="#9a664a"/><stop offset="0.3" stop-color="#c89878"/><stop offset="1" stop-color="#e0bea4"/></linearGradient>
<filter id="pb" x="-5%" y="-5%" width="110%" height="110%"><feGaussianBlur stdDeviation="1.1"/></filter>
<symbol id="pt" viewBox="0 0 148 207">
<rect width="148" height="207" fill="url(#pbg)"/>
<g filter="url(#pb)">
<path d="M0 140 C8 146 30 146 52 146 L95 146 C118 146 138 146 148 140 L148 207 L0 207Z" fill="#efece7"/>
<path d="M54 112 L90 112 L91 150 L67 167 L51 150Z" fill="url(#nk)"/>
<path d="M60 23 C50 24 42 31 38 42 C32 55 28 71 26 88 C25 100 24 108 20 122 C16 132 8 140 4 150 C6 160 12 165 11 171 C10 185 8 195 9 207 L29 207 C34 195 44 180 47 171 C50 160 56 150 57 140 C56 125 52 110 50 92 L50 72 C54 62 62 60 70 60 C82 60 88 66 90 80 C91 95 89 108 86 125 C86 140 92 145 92 152 C92 165 96 185 110 207 L143 207 C144 190 146 170 147 150 C144 140 138 130 131 120 C128 108 125 96 121 86 C117 72 112 62 107 55 C101 46 95 39 88 33 C80 27 70 22 60 23Z" fill="url(#hr)"/>
<path d="M60 23 C50 24 42 31 38 42 C33 54 30 66 29 78 C36 62 46 52 62 48 C74 45 84 46 90 38 C82 30 72 22 60 23Z" fill="#3e291c" opacity="0.4"/>
<path d="M67 55 C56 56 45 64 43 80 C42 98 50 115 71 125 C88 117 96 99 95 80 C94 64 82 55 67 55Z" fill="url(#fc)"/>
<path d="M43 80 C45 66 54 57 68 55 C58 61 50 70 47 84 C46 96 48 106 52 115 C46 108 43 96 43 80Z" fill="#46301f" opacity="0.9"/>
<path d="M95 80 C94 67 88 59 80 56 C87 65 92 77 93 90 C93 102 90 111 85 117 C92 111 95 99 95 80Z" fill="#5a3b26" opacity="0.8"/>
<path d="M51 76 C55 73.5 61 73.5 65 76 M76 76 C80 73.5 86 73.5 90 76" stroke="#46291a" stroke-width="2" fill="none"/>
<ellipse cx="58" cy="83" rx="4.6" ry="2.2" fill="#45352c"/><ellipse cx="84" cy="83" rx="4.6" ry="2.2" fill="#45352c"/>
<path d="M69 86 C68 92 67 97 67.5 101 C69.5 102.5 72 102.5 74.5 101" stroke="#a06a4a" stroke-width="1.2" fill="none"/>
<path d="M71 86 L71.5 98" stroke="#f4e0cc" stroke-width="2.2"/>
<path d="M61 109.5 C66 107.5 75 107.5 80 109.5 C75 114.5 66 114.5 61 109.5Z" fill="#b27464"/>
<path d="M55 147 L66 166 L76 150 L91 145 L100 207 L38 207 L46 150Z" fill="#f5f3ef"/>
<path d="M32 140 C26 155 20 170 20 185 C20 195 18 202 18 207" stroke="#3a2415" stroke-width="8" fill="none" opacity="0.8" stroke-linecap="round"/>
<path d="M46 125 C40 140 34 150 38 165 C42 180 40 195 36 207" stroke="#b98350" stroke-width="6" fill="none" opacity="0.75"/>
<path d="M24 125 C18 140 10 150 8 165 C6 180 10 195 12 207" stroke="#a87245" stroke-width="4" fill="none" opacity="0.7"/>
<path d="M100 135 C98 150 100 165 104 180 C108 192 112 200 116 207" stroke="#3e2616" stroke-width="9" fill="none" opacity="0.8"/>
<path d="M112 120 C120 140 126 160 130 180 C132 192 134 200 136 207" stroke="#b8824e" stroke-width="6" fill="none" opacity="0.75"/>
<path d="M96 95 C100 110 98 125 96 140" stroke="#3e2616" stroke-width="5" fill="none" opacity="0.6"/>
<path d="M104 60 C112 85 124 110 132 140 C136 160 140 185 142 207" stroke="#c08c55" stroke-width="3" fill="none" opacity="0.6"/>
<path d="M84 44 C96 57 104 72 108 90 C112 110 118 125 124 140" stroke="#b07844" stroke-width="3.5" fill="none" opacity="0.6"/>
<path d="M38 60 C34 80 33 100 30 120" stroke="#a06c40" stroke-width="3" fill="none" opacity="0.6"/>
<path d="M60 23 C50 24 42 31 38 42 C32 55 28 71 26 88 M60 23 C70 22 80 27 88 33 C95 39 101 46 107 55 C112 62 117 72 121 86" stroke="#d3d2ce" stroke-width="3" fill="none" opacity="0.4"/>
</g>
</symbol></defs></svg>
<svg class="a" style="left:225px;top:193px" width="147.5" height="206.5" viewBox="0 0 148 207" preserveAspectRatio="none"><use href="#pt"/></svg>
<svg class="a" style="left:400px;top:193px" width="147.5" height="206.5" viewBox="0 0 148 207" preserveAspectRatio="none"><use href="#pt"/></svg>
<svg class="a" style="left:574.3px;top:193px" width="147.5" height="206.5" viewBox="0 0 148 207" preserveAspectRatio="none"><use href="#pt"/></svg>
<svg class="a" style="left:748px;top:193px" width="147.5" height="206.5" viewBox="0 0 148 207" preserveAspectRatio="none"><use href="#pt"/></svg>
<svg class="a" style="left:225px;top:420px" width="147.5" height="206.5" viewBox="0 0 148 207" preserveAspectRatio="none"><use href="#pt"/></svg>
<svg class="a" style="left:400px;top:420px" width="147.5" height="206.5" viewBox="0 0 148 207" preserveAspectRatio="none"><use href="#pt"/></svg>
<svg class="a" style="left:574.3px;top:420px" width="147.5" height="206.5" viewBox="0 0 148 207" preserveAspectRatio="none"><use href="#pt"/></svg>
<svg class="a" style="left:748px;top:420px" width="147.5" height="206.5" viewBox="0 0 148 207" preserveAspectRatio="none"><use href="#pt"/></svg>
<div class="a" style="left:1078px;top:63px;width:3px;height:665px;background:#383838;"></div>
<div class="a" style="left:1081px;top:63px;width:37px;height:665px;background:#535353;"></div>
<div class="a" style="left:1081px;top:63px;width:37px;height:12px;background:#3f3f3f;"></div>
<svg class="a" style="left:1104px;top:66px" width="10" height="7" fill="none" stroke="#dcdcdc" stroke-width="1.4"><path d="M3.5 1 L1 3.5 L3.5 6 M7.5 1 L5 3.5 L7.5 6"/></svg>
<div class="a" style="left:1081px;top:75px;width:37px;height:1px;background:#3a3a3a;"></div>
<div class="a" style="left:1089px;top:77px;width:22px;height:10px;background:repeating-linear-gradient(90deg,#5d5d5d 0 1px,transparent 1px 2px)"></div>
<svg class="a" style="left:1093px;top:89px" width="16" height="18"><rect x="0.5" y="0.5" width="4" height="4" fill="none" stroke="#e0e0e0"/><rect x="0.5" y="6.5" width="4" height="4" fill="none" stroke="#e0e0e0"/><rect x="0" y="12" width="5" height="5" fill="#e0e0e0"/><path d="M8 3 L11 1 M8 3 L10 5.5 M8 3 C14 3 15 10 10 15" fill="none" stroke="#e0e0e0" stroke-width="1.6"/></svg>
<div class="a" style="left:1081px;top:115px;width:37px;height:2px;background:#3d3d3d;"></div>
<div class="a" style="left:1089px;top:119px;width:22px;height:9px;background:repeating-linear-gradient(90deg,#5d5d5d 0 1px,transparent 1px 2px)"></div>
<svg class="a" style="left:1092px;top:131px" width="18" height="17"><path d="M5 0.5 L9.5 2.5 L9.5 7.5 L5 9.5 L0.5 7.5 L0.5 2.5Z" fill="#9a9a9a" stroke="#e0e0e0" stroke-width="1.1"/><path d="M0.5 2.5 L5 4.5 L9.5 2.5 M5 4.5 L5 9.5" fill="none" stroke="#e0e0e0" stroke-width="1"/><rect x="12" y="1" width="4" height="3.5" fill="#e0e0e0"/><rect x="12" y="6" width="4" height="3.5" fill="#e0e0e0"/><rect x="0" y="12" width="16" height="4" fill="#e0e0e0"/><path d="M12 13 L14 15 L16 13" fill="#535353"/></svg>
<div class="a" style="left:1081px;top:156px;width:37px;height:2px;background:#3d3d3d;"></div>
<div class="a" style="left:1118px;top:63px;width:3px;height:665px;background:#383838;"></div>
<div class="a" style="left:1121px;top:63px;width:245px;height:12px;background:#3f3f3f;"></div>
<svg class="a" style="left:1351px;top:66px" width="10" height="7" fill="none" stroke="#dcdcdc" stroke-width="1.4"><path d="M1 1 L3.5 3.5 L1 6 M5 1 L7.5 3.5 L5 6"/></svg>
<div class="a" style="left:1121px;top:75px;width:245px;height:148px;background:#535353;"></div>
<div class="a" style="left:1121px;top:75px;width:245px;height:28px;background:#424242;"></div>
<div class="a" style="left:1121px;top:75px;width:43px;height:28px;background:#535353;"></div>
<div class="t" style="left:1130px;top:83px;font-size:12px;color:#ececec;">颜色</div>
<div class="a" style="left:1207px;top:77px;width:1px;height:26px;background:#3a3a3a;"></div>
<div class="t" style="left:1174px;top:83px;font-size:12px;color:#a6a6a6;">色板</div>
<svg class="a" style="left:1348px;top:85px" width="11" height="9" fill="#cfcfcf"><rect y="0" width="11" height="1.3"/><rect y="2.6" width="11" height="1.3"/><rect y="5.2" width="11" height="1.3"/><rect y="7.8" width="11" height="1.3"/></svg>
<div class="a" style="left:1141px;top:124px;width:19px;height:19px;background:#5a5c59;border:1.5px solid #f4f4f4"></div>
<div class="a" style="left:1130px;top:113px;width:20px;height:20px;background:#ffffff;border:1px solid #2a2a2a"></div>
<div class="a" style="left:1166px;top:109px;width:147px;height:108px;background:linear-gradient(to bottom,rgba(0,0,0,0),#000),linear-gradient(to right,#fff,#ff0000)"></div>
<svg class="a" style="left:1162px;top:105px" width="10" height="10"><path d="M4 9 A5 5 0 0 0 9 4" fill="none" stroke="#222" stroke-width="1.2"/><path d="M4 4 L9 4 A5 5 0 0 1 4 9Z" fill="#fff"/></svg>
<div class="a" style="left:1329px;top:109px;width:21px;height:108px;background:linear-gradient(to bottom,#ff0000 0%,#ff00ff 17%,#0000ff 33%,#00ffff 50%,#00ff00 67%,#ffff00 83%,#ff0000 100%)"></div>
<svg class="a" style="left:1320px;top:210px" width="10" height="12"><path d="M1 1 L1 11 L9 6Z" fill="#f0f0f0" stroke="#777" stroke-width="0.8"/></svg>
<div class="a" style="left:1121px;top:223px;width:245px;height:3px;background:#383838;"></div>
<div class="a" style="left:1121px;top:226px;width:245px;height:140px;background:#535353;"></div>
<div class="a" style="left:1121px;top:226px;width:245px;height:28px;background:#424242;"></div>
<div class="a" style="left:1121px;top:226px;width:44px;height:28px;background:#535353;"></div>
<div class="t" style="left:1130px;top:234px;font-size:12px;color:#ececec;">调整</div>
<svg class="a" style="left:1348px;top:236px" width="11" height="9" fill="#cfcfcf"><rect y="0" width="11" height="1.3"/><rect y="2.6" width="11" height="1.3"/><rect y="5.2" width="11" height="1.3"/><rect y="7.8" width="11" height="1.3"/></svg>
<div class="t" style="left:1131px;top:263px;font-size:12px;color:#e2e2e2;">添加调整</div>
<svg class="a" style="left:1150px;top:282px" width="150" height="75" fill="none" stroke="#dcdcdc" stroke-width="1.2"><circle cx="27" cy="11" r="5"/><path d="M27 6 A5 5 0 0 1 27 16Z" fill="#dcdcdc"/><path d="M27 2 V3.5 M27 18.5 V20 M18 11 H19.5 M34.5 11 H36 M20.5 4.5 L21.5 5.5 M32.5 16.5 L33.5 17.5 M20.5 17.5 L21.5 16.5 M32.5 5.5 L33.5 4.5"/><path d="M43 17 L43 13 L45 9 L47 12 L49 5 L51 11 L53 7 L55 12 L57 8 L59 17Z" fill="#dcdcdc" stroke="none"/><rect x="68" y="4" width="15" height="13"/><path d="M73 4 V17 M78 4 V17 M68 8.5 H83 M68 13 H83"/><path d="M68 17 C74 15 76 6 83 4" stroke-width="1.5"/><rect x="92" y="4" width="16" height="13" fill="#8a8a8a"/><path d="M92 17 L108 4 L108 17Z" fill="#bdbdbd" stroke="none"/><path d="M117 4 L131 4 L124 17Z" fill="#707070" stroke="#c8c8c8"/><rect x="7" y="31" width="15" height="13"/><path d="M7 35 H22 M11 31 V35 M15 31 V35 M19 31 V35"/><rect x="8" y="36" width="13" height="7" fill="#9a9a9a" stroke="none"/><path d="M40 31 V44 M32 34 H48 M34 34 L31 40 H37Z M46 34 L43 40 H49Z"/><path d="M31 40 A3 3 0 0 0 37 40Z M43 40 A3 3 0 0 0 49 40Z" fill="#dcdcdc"/><rect x="57" y="31" width="15" height="13"/><rect x="64" y="31" width="8" height="13" fill="#aaa" stroke="none"/><path d="M79 34 H83 L84 32 H89 L90 34 H94 V43 H79Z" fill="#dcdcdc" stroke="none"/><circle cx="86.5" cy="38.5" r="3" fill="#535353"/><circle cx="91" cy="42" r="3.5" fill="#535353" stroke="#dcdcdc"/><circle cx="108" cy="35" r="5" fill="#9a9a9a" stroke="none"/><circle cx="105" cy="40" r="5" fill="#c4c4c4" stroke="none"/><circle cx="111" cy="40" r="5" fill="#dcdcdc" stroke="none" opacity="0.85"/><rect x="129" y="31" width="14" height="13"/><path d="M129 35.3 H143 M129 39.6 H143 M133.7 31 V44 M138.3 31 V44"/><rect x="20" y="57" width="15" height="13"/><ellipse cx="27.5" cy="63.5" rx="4" ry="3" fill="#dcdcdc"/><rect x="44" y="57" width="15" height="13" fill="#8a8a8a"/><path d="M44 68 L57 57 M48 70 L59 60 M44 63 L51 57" stroke="#e8e8e8" stroke-width="1.4"/><rect x="68" y="57" width="15" height="13"/><path d="M68 67 L72 63 L75 65 L79 60 L83 62 L83 70 L68 70Z" fill="#dcdcdc" stroke="none"/><rect x="92" y="57" width="15" height="13"/><path d="M92 57 L99.5 63.5 L92 70Z M107 57 L99.5 63.5 L107 70Z" fill="#dcdcdc" stroke="none"/><defs><linearGradient id="gm" x1="0" x2="1"><stop offset="0" stop-color="#222"/><stop offset="1" stop-color="#eee"/></linearGradient></defs><rect x="116" y="57" width="15" height="13" fill="url(#gm)"/></svg>
<div class="a" style="left:1121px;top:366px;width:245px;height:3px;background:#383838;"></div>
<div class="a" style="left:1121px;top:369px;width:245px;height:359px;background:#535353;"></div>
<div class="a" style="left:1121px;top:369px;width:245px;height:28px;background:#424242;"></div>
<div class="a" style="left:1121px;top:369px;width:44px;height:28px;background:#535353;"></div>
<div class="t" style="left:1130px;top:377px;font-size:12px;color:#ececec;">图层</div>
<div class="a" style="left:1208px;top:371px;width:1px;height:26px;background:#3a3a3a;"></div>
<div class="t" style="left:1175px;top:377px;font-size:12px;color:#a6a6a6;">通道</div>
<div class="a" style="left:1253px;top:371px;width:1px;height:26px;background:#3a3a3a;"></div>
<div class="t" style="left:1219px;top:377px;font-size:12px;color:#a6a6a6;">路径</div>
<svg class="a" style="left:1348px;top:379px" width="11" height="9" fill="#cfcfcf"><rect y="0" width="11" height="1.3"/><rect y="2.6" width="11" height="1.3"/><rect y="5.2" width="11" height="1.3"/><rect y="7.8" width="11" height="1.3"/></svg>
<div class="a" style="left:1125px;top:405px;width:86px;height:19px;background:#474747;border:1px solid #3b3b3b;border-radius:2px"></div>
<svg class="a" style="left:1131px;top:408px" width="14" height="13"><circle cx="8.5" cy="5" r="3.7" fill="none" stroke="#e0e0e0" stroke-width="1.5"/><path d="M6 7.5 L1.5 12" stroke="#e0e0e0" stroke-width="2"/></svg>
<div class="t" style="left:1147px;top:409px;font-size:12px;color:#e6e6e6;">类型</div>
<svg class="a" style="left:1198px;top:412px" width="9" height="6"><path d="M1 1 L4.5 4.5 L8 1" stroke="#c0c0c0" fill="none" stroke-width="1.2"/></svg>
<svg class="a" style="left:1225px;top:406px" width="145" height="18" fill="none" stroke="#dedede" stroke-width="1.3"><rect x="2" y="4" width="12" height="9"/><path d="M3.5 12 L7 8 L9 10 L11 7.5 L13 12Z" fill="#dedede" stroke="none"/><circle cx="33" cy="8.5" r="5.5"/><path d="M29 12.5 L37 4.5 A5.5 5.5 0 0 1 29 12.5Z" fill="#dedede" stroke="none"/><path d="M51 3.5 H61 V6 M51 3.5 V6 M56 3.5 V13.5 M54 13.5 H58" stroke-width="2"/><rect x="76" y="4" width="10" height="9"/><rect x="74.5" y="2.5" width="3" height="3" fill="#dedede" stroke="none"/><rect x="84.5" y="2.5" width="3" height="3" fill="#dedede" stroke="none"/><rect x="74.5" y="11.5" width="3" height="3" fill="#dedede" stroke="none"/><rect x="84.5" y="11.5" width="3" height="3" fill="#dedede" stroke="none"/><path d="M100 3 H106 L109 6 V14 H100Z"/><rect x="98" y="8" width="6" height="6" fill="#dedede" stroke="none"/></svg>
<div class="a" style="left:1350px;top:404px;width:12px;height:21px;background:#3d3d3d;border-radius:6px"></div>
<div class="a" style="left:1351px;top:405px;width:10px;height:10px;background:#e8e8e8;border-radius:5px"></div>
<div class="a" style="left:1121px;top:428px;width:245px;height:1px;background:#4a4a4a;"></div>
<div class="a" style="left:1125px;top:432px;width:117px;height:19px;background:#474747;border:1px solid #3b3b3b;border-radius:2px"></div>
<div class="t" style="left:1133px;top:436px;font-size:12px;color:#e6e6e6;">穿透</div>
<svg class="a" style="left:1229px;top:439px" width="9" height="6"><path d="M1 1 L4.5 4.5 L8 1" stroke="#c0c0c0" fill="none" stroke-width="1.2"/></svg>
<div class="t" style="left:1250px;top:436px;font-size:12px;color:#e0e0e0;">不透明度:</div>
<div class="a" style="left:1307px;top:432px;width:55px;height:19px;background:#454545;border:1px solid #3b3b3b;border-radius:2px"></div>
<div class="a" style="left:1345px;top:433px;width:1px;height:17px;background:#3b3b3b;"></div>
<div class="t" style="left:1310px;top:436px;font-size:11.5px;color:#e6e6e6;">100%</div>
<svg class="a" style="left:1350px;top:439px" width="9" height="6"><path d="M1 1 L4.5 4.5 L8 1" stroke="#c0c0c0" fill="none" stroke-width="1.2"/></svg>
<div class="a" style="left:1121px;top:456px;width:245px;height:1px;background:#4a4a4a;"></div>
<div class="t" style="left:1128px;top:462px;font-size:12px;color:#bdbdbd;">锁定:</div>
<svg class="a" style="left:1162px;top:460px" width="110" height="16" fill="none" stroke="#9c9c9c" stroke-width="1.2"><rect x="2" y="3" width="10" height="10"/><rect x="2" y="3" width="5" height="5" fill="#9c9c9c"/><rect x="7" y="8" width="5" height="5" fill="#9c9c9c"/><path d="M24 14 L33 3" stroke-width="2"/><path d="M52 2 V14 M46 8 H58 M50 4 L52 2 L54 4 M50 12 L52 14 L54 12 M48 6 L46 8 L48 10 M56 6 L58 8 L56 10"/><path d="M69 4 H81 M69 12 H81 M71 2 V14 M79 2 V14" stroke-width="1.5"/><rect x="92" y="7" width="9" height="7" fill="#e6e6e6" stroke="none"/><path d="M94 7 V5 A2.5 2.5 0 0 1 99 5 V7" stroke="#e6e6e6" stroke-width="1.5"/></svg>
<div class="t" style="left:1275px;top:462px;font-size:12px;color:#e0e0e0;">填充:</div>
<div class="a" style="left:1307px;top:459px;width:55px;height:19px;background:#454545;border:1px solid #3b3b3b;border-radius:2px"></div>
<div class="a" style="left:1345px;top:460px;width:1px;height:17px;background:#3b3b3b;"></div>
<div class="t" style="left:1310px;top:463px;font-size:11.5px;color:#e6e6e6;">100%</div>
<svg class="a" style="left:1350px;top:466px" width="9" height="6"><path d="M1 1 L4.5 4.5 L8 1" stroke="#c0c0c0" fill="none" stroke-width="1.2"/></svg>
<div class="a" style="left:1121px;top:483px;width:245px;height:1px;background:#474747;"></div>
<div class="a" style="left:1152px;top:485px;width:198px;height:21px;background:#6a6a6a;"></div>
<div class="a" style="left:1121px;top:506px;width:245px;height:1px;background:#474747;"></div>
<div class="a" style="left:1152px;top:485px;width:1px;height:52px;background:#474747;"></div>
<div class="a" style="left:1350px;top:485px;width:1px;height:52px;background:#4a4a4a;"></div>
<svg class="a" style="left:1128px;top:491px" width="16" height="10"><path d="M1 5 C4 0.5 12 0.5 15 5 C12 9.5 4 9.5 1 5Z" fill="#e0e0e0"/><circle cx="8" cy="5" r="2.3" fill="#333"/></svg>
<svg class="a" style="left:1128px;top:518px" width="16" height="10"><path d="M1 5 C4 0.5 12 0.5 15 5 C12 9.5 4 9.5 1 5Z" fill="#e0e0e0"/><circle cx="8" cy="5" r="2.3" fill="#333"/></svg>
<svg class="a" style="left:1155px;top:489px" width="30" height="14"><path d="M1.5 3 L4.5 6.5 L1.5 10" stroke="#d8d8d8" fill="none" stroke-width="1"/><path d="M10 2 H16 L17 3.5 H24 V12 H10Z" fill="#e2e2e2"/></svg>
<div class="t" style="left:1193px;top:489px;font-size:12px;color:#f0f0f0;">组 2</div>
<div class="a" style="left:1155px;top:511px;width:31px;height:22px;background:#ffffff;"></div>
<div class="t" style="left:1197px;top:516px;font-size:12px;color:#e6e6e6;">背景</div>
<svg class="a" style="left:1322px;top:515px" width="12" height="13"><rect x="1" y="5.5" width="10" height="7" fill="none" stroke="#d8d8d8" stroke-width="1.3"/><path d="M3.5 5.5 V3.5 A2.5 2.5 0 0 1 8.5 3.5 V5.5" fill="none" stroke="#d8d8d8" stroke-width="1.3"/><rect x="5.3" y="8" width="1.4" height="2" fill="#d8d8d8"/></svg>
<div class="a" style="left:1121px;top:537px;width:245px;height:1px;background:#474747;"></div>
<div class="a" style="left:1121px;top:703px;width:245px;height:25px;background:#4b4b4b;"></div>
<div class="a" style="left:1121px;top:702px;width:245px;height:1px;background:#3e3e3e;"></div>
<svg class="a" style="left:1158px;top:707px" width="185" height="18" fill="none" stroke="#dcdcdc" stroke-width="1.3"><rect x="1" y="5" width="9" height="6" rx="3" stroke="#9a9a9a"/><rect x="10" y="5" width="9" height="6" rx="3" stroke="#9a9a9a"/><text x="31" y="13" font-family="Liberation Serif" font-style="italic" font-size="14" fill="#dcdcdc" stroke="none">fx</text><path d="M37 16 L40 16 L38.5 18Z" fill="#dcdcdc" stroke="none"/><rect x="57" y="3" width="15" height="11" fill="#dcdcdc" stroke="none"/><circle cx="64.5" cy="8.5" r="3.5" fill="#535353" stroke="none"/><circle cx="92.5" cy="8.5" r="6"/><path d="M88.5 12.5 L96.5 4.5 A6 6 0 0 1 88.5 12.5Z" fill="#dcdcdc" stroke="none"/><path d="M91 16 L94 16 L92.5 18Z" fill="#dcdcdc" stroke="none"/><path d="M111 3 H117 L118.5 5 H126 V14 H111Z" fill="#dcdcdc" stroke="none"/><path d="M139 3 H151 V14 H143 L139 10Z"/><path d="M139 10 L143 10 L143 14"/><path d="M166 4 H180 M170 4 V2 H176 V4 M167 5 V15 H179 V5 M170.5 7 V13 M173 7 V13 M175.5 7 V13"/></svg>
<div class="a" style="left:362.5px;top:31.5px;width:31.5px;height:26px;border:3px solid #f21d1d;border-radius:2px"></div>
<div class="a" style="left:452.3px;top:30.2px;width:27px;height:31px;border:3px solid #f21d1d;border-radius:2px"></div>
<div class="a" style="left:1072px;top:469px;width:175px;height:43px;border:3px solid #f21d1d"></div>
<svg class="a" style="left:0;top:0" width="1366" height="728" fill="#f21d1d"><path d="M936.6 178.4 L949.5 167.3 L952.5 171.8 L1021.5 163 L1022.5 165 L957 180.2 L952 184.2Z"/><path d="M1009.5 491.2 L1051 483 L1049.5 479.2 L1066.5 485.5 L1051.5 495.8 L1051.5 491.3 L1010 493.8Z"/></svg>
<svg class="a" style="left:0;top:0" width="1366" height="728" fill="none" stroke="#f21d1d" stroke-width="2.2" stroke-linecap="round" stroke-linejoin="round"><path d="M416.8 88.5 C418 87.5 419.5 87.2 420.8 87.2 C423 87.2 424.2 88.6 424.2 90.6 C424.2 93 422.3 94.6 419.5 94.8 C422.6 95 424.6 96.8 424.6 99.2 C424.6 101.8 422.6 103 420.4 103 C418.7 103 417.3 102.5 416.3 101.8"/><path d="M983.8 206.3 C984.5 204 986.4 203 988.4 203 C991 203 992.8 204.8 992.8 207.3 C992.8 210 990.8 212.3 983.6 218.6 L993.8 218.6"/><path d="M1009 521.6 C1011 520.6 1013 519 1014.6 517.8 L1014.6 534.6"/></svg>
<div class="t" style="left:1126px;top:669px;font-size:34px;font-weight:bold;color:#fff;-webkit-text-stroke:1.2px #fff;text-shadow:2.5px 2.5px 0 #000">头条</div>
<div class="t" style="left:1203px;top:669px;font-size:34px;font-weight:500;color:#fff;text-shadow:1.5px 1.5px 0 #000,-0.5px -0.5px 0 #000;letter-spacing:0.5px">@道九卦</div>
</body></html>
